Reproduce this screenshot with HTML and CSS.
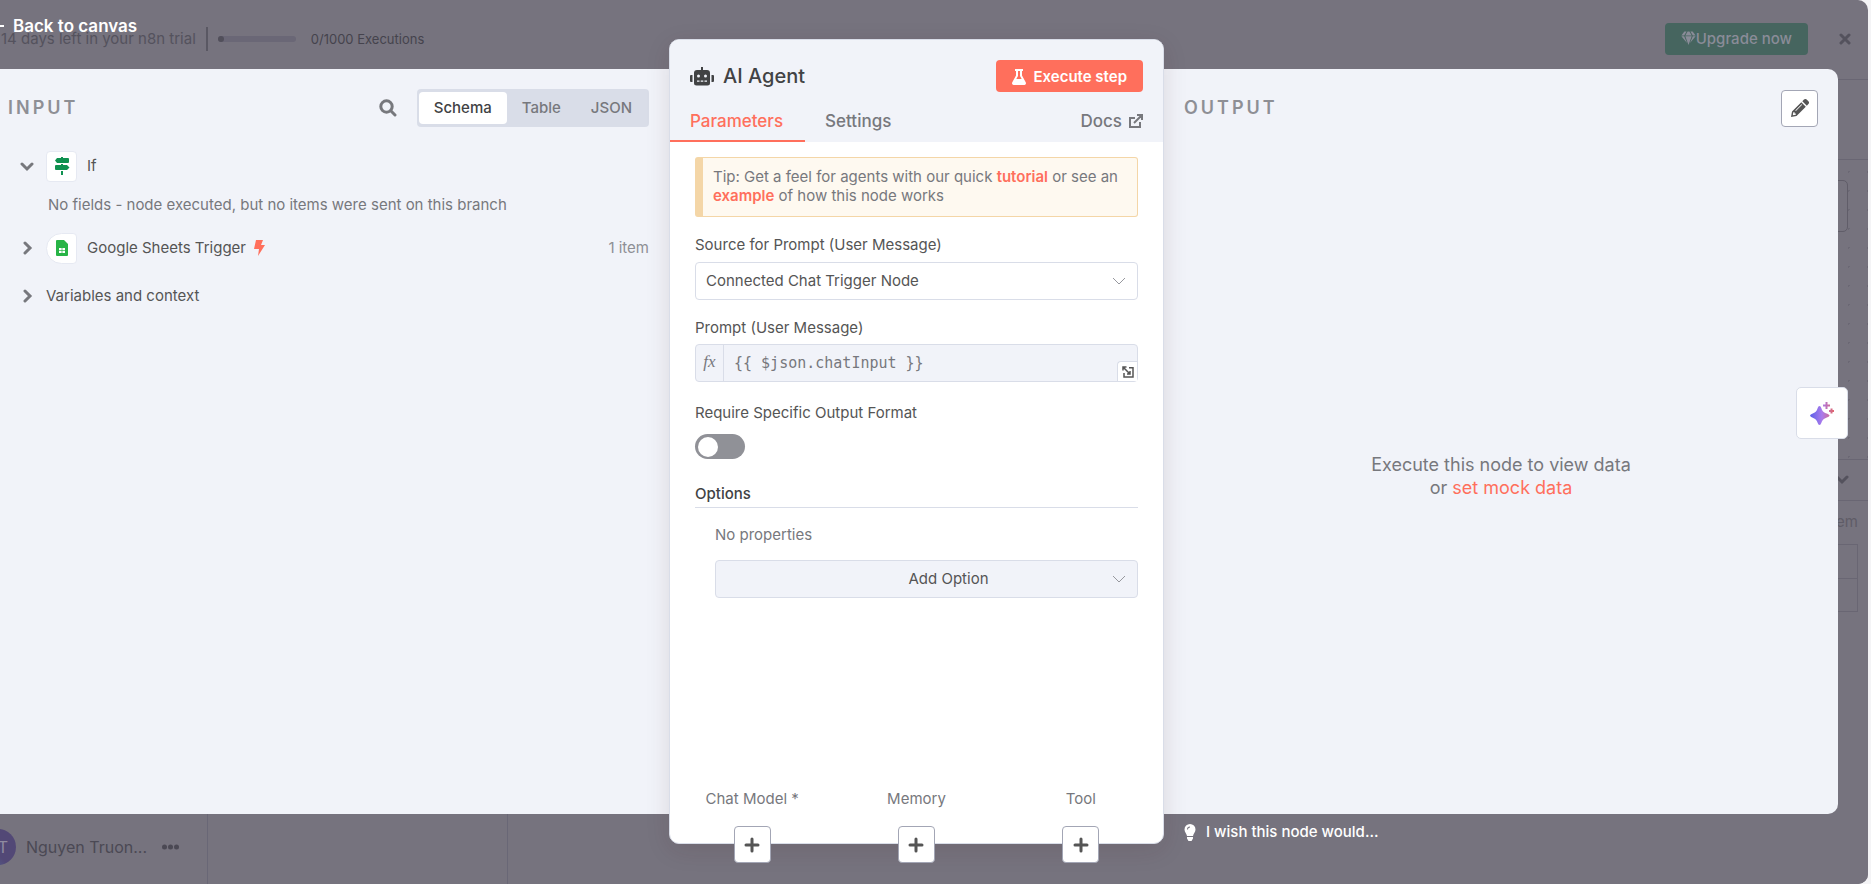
FILE: index.html
```html
<!DOCTYPE html>
<html lang="en">
<head>
    <meta charset="UTF-8">
    <meta name="viewport" content="width=device-width, initial-scale=1.0">
    <title>AI Agent</title>
    <link rel="stylesheet" href="styles.css">
</head>
<body>

<div class="app">
    <!-- workflow editor, dimmed behind the node view -->
    <header class="trial-bar">
        <span class="trial-text">14 days left in your n8n trial</span>
        <span class="trial-divider"></span>
        <span class="trial-progress"><span class="trial-progress-fill"></span></span>
        <span class="trial-count">0/1000 Executions</span>
        <button class="upgrade-btn" type="button">
            <svg width="15" height="15" viewBox="0 0 16 15" fill="currentColor"><path d="M3.6 0h2.3L3.4 4.2H.4zM7 0h2l2.4 4.2H4.600zM10.100 0h2.300l3.200 4.200h-3zM.4 5.200h3l3 7.200zM4.600 5.200h6.800L8 14.500zM12.600 5.200h3L9.600 12.400z"/></svg>Upgrade now
        </button>
        <button class="dismiss-btn" type="button" aria-label="Dismiss">
            <svg width="12" height="12" viewBox="0 0 12 12" fill="none" stroke="currentColor" stroke-width="3" stroke-linecap="round"><path d="M2 2l8 8M10 2l-8 8"/></svg>
        </button>
    </header>

    <div class="editor">
        <aside class="sidebar">
            <div class="user">
                <span class="avatar">T</span>
                <span class="user-name">Nguyen Truon...</span>
                <svg width="17" height="6" viewBox="0 0 17 6" fill="currentColor"><circle cx="2.500" cy="3" r="2.500"/><circle cx="8.500" cy="3" r="2.500"/><circle cx="14.500" cy="3" r="2.500"/></svg>
            </div>
        </aside>
        <div class="workflow">
            <div class="workflow-head"></div>
            <div class="canvas"><span class="canvas-tool"></span></div>
            <div class="logs">
                <div class="logs-head">
                    <svg width="14" height="10" viewBox="0 0 14 10" fill="none" stroke="currentColor" stroke-width="3" stroke-linecap="round"><path d="M2 2l5 5 5-5"/></svg>
                </div>
                <div class="logs-body">
                    <div class="logs-list"></div>
                    <div class="logs-data">
                        <span class="logs-count">1 item</span>
                        <div class="logs-table"><div></div><div></div></div>
                    </div>
                </div>
            </div>
        </div>
    </div>

    <!-- node detail view -->
    <div class="node-view">
        <a class="back-link" href="#"><svg width="16" height="12" viewBox="0 0 16 12" fill="none" stroke="currentColor" stroke-width="2"><path d="M16 6H2M7 1L2 6l5 5"/></svg>Back to canvas</a>

        <main class="panels">
            <section class="panel input-panel">
                <div class="panel-head">
                    <h2>INPUT</h2>
                    <button class="search-btn" type="button" aria-label="Search">
                        <svg width="18" height="18" viewBox="0 0 18 18" fill="none" stroke="currentColor" stroke-width="3"><circle cx="7.500" cy="7.500" r="5.700"/><path d="M11.800 11.800L16 16" stroke-linecap="round"/></svg>
                    </button>
                    <div class="view-switch">
                        <button class="active" type="button">Schema</button>
                        <button type="button">Table</button>
                        <button type="button">JSON</button>
                    </div>
                </div>

                <div class="schema">
                    <div class="schema-row">
                        <svg class="chevron" width="14" height="14" viewBox="0 0 14 14"><path d="M2 5l5 5 5-5"/></svg>
                        <span class="node-icon">
                            <svg width="16" height="18" viewBox="0 0 16 18" fill="#0f9150"><path d="M7 0h2v1h5a1 1 0 0 1 1 1v3a1 1 0 0 1-1 1H3L1 3.500 3 1h4zM7 7h2v1h4l2.500 2.500L13 13H2a1 1 0 0 1-1-1V9a1 1 0 0 1 1-1h5zM7 14h2v4H7z"/></svg>
                        </span>
                        <span>If</span>
                    </div>
                    <p class="schema-note">No fields - node executed, but no items were sent on this branch</p>
                    <div class="schema-row">
                        <svg class="chevron" width="14" height="14" viewBox="0 0 14 14"><path d="M5 2l5 5-5 5"/></svg>
                        <span class="node-icon trigger">
                            <svg width="12" height="16" viewBox="0 0 12 16"><path fill="#28b446" d="M1 0h7l4 4v11a1 1 0 0 1-1 1H1a1 1 0 0 1-1-1V1a1 1 0 0 1 1-1z"/><path fill="#fff" d="M3 8h6v5H3z"/><path stroke="#28b446" stroke-width=".7" d="M3 10.500h6M6 8v5"/></svg>
                        </span>
                        <span>Google Sheets Trigger</span>
                        <svg class="bolt" width="11" height="16" viewBox="0 0 11 16"><path d="M2 0h7L7 5h4L4 16l1-7H0z"/></svg>
                        <span class="item-count">1 item</span>
                    </div>
                    <div class="schema-row variables">
                        <svg class="chevron" width="14" height="14" viewBox="0 0 14 14"><path d="M5 2l5 5-5 5"/></svg>
                        <span>Variables and context</span>
                    </div>
                </div>
            </section>

            <section class="node-card">
                <div class="card-head">
                    <div class="title-row">
                        <svg width="24" height="19" viewBox="0 0 24 19" fill="#414244"><path d="M11 0h2v3h4a3 3 0 0 1 3 3v10a2.500 2.500 0 0 1-2.500 2.500h-11A2.500 2.500 0 0 1 4 16V6a3 3 0 0 1 3-3h4zM0 9a1 1 0 0 1 1-1h1.500v7H1a1 1 0 0 1-1-1zM21.500 8H23a1 1 0 0 1 1 1v5a1 1 0 0 1-1 1h-1.500z"/><g fill="#f1f3f9"><circle cx="8.500" cy="9" r="1.500"/><circle cx="15.500" cy="9" r="1.500"/><path d="M7 13.500h2.500v1.200H7zM10.700 13.500h2.600v1.200h-2.600zM14.500 13.500H17v1.200h-2.500z"/></g></svg>
                        <h1>AI Agent</h1>
                        <button class="execute-btn" type="button">
                            <svg width="14" height="16" viewBox="0 0 14 16" fill="currentColor"><path fill-rule="evenodd" d="M3 0h8v2h-1v4.500l3.700 6.800A1.800 1.800 0 0 1 12 16H2A1.800 1.800 0 0 1 .3 13.300L4 6.500V2H3zM6 2v5L4.300 10h5.400L8 7V2z"/></svg>
                            Execute step
                        </button>
                    </div>
                    <nav class="tabs">
                        <a class="active" href="#">Parameters</a>
                        <a href="#">Settings</a>
                        <a class="docs" href="#">Docs
                            <svg width="14" height="14" viewBox="0 0 14 14" fill="none" stroke="currentColor" stroke-width="2"><path d="M6 4H1v9h10V8M8 1h5v5M13 1L5 9"/></svg>
                        </a>
                    </nav>
                </div>

                <form class="params">
                    <p class="tip">Tip: Get a feel for agents with our quick <a href="#">tutorial</a> or see an <a href="#">example</a> of how this node works</p>

                    <div class="field">
                        <label for="source">Source for Prompt (User Message)</label>
                        <div class="select">
                            <select id="source"><option>Connected Chat Trigger Node</option></select>
                            <svg width="14" height="8" viewBox="0 0 14 8"><path d="M1 1l6 6 6-6"/></svg>
                        </div>
                    </div>

                    <div class="field prompt">
                        <label for="prompt">Prompt (User Message)</label>
                        <div class="expression">
                            <span class="fx">fx</span>
                            <input id="prompt" type="text" value="{{ $json.chatInput }}" readonly>
                            <button class="expand-btn" type="button" aria-label="Open editor">
                                <svg width="12" height="12" viewBox="0 0 12 12" fill="none" stroke="currentColor" stroke-width="1.500"><path d="M7 1.700h4V11H2V7M1 4.500V1h3.500M1 1l7 7M8 5v3H5"/></svg>
                            </button>
                        </div>
                    </div>

                    <div class="field format">
                        <label for="format">Require Specific Output Format</label>
                        <input class="toggle" id="format" type="checkbox">
                    </div>

                    <h3>Options</h3>
                    <div class="options">
                        <p>No properties</p>
                        <div class="select add-option">
                            <select aria-label="Add Option"><option>Add Option</option></select>
                            <svg width="14" height="8" viewBox="0 0 14 8"><path d="M1 1l6 6 6-6"/></svg>
                        </div>
                    </div>
                </form>

                <div class="connections">
                    <div class="connection">
                        <span>Chat Model *</span>
                        <button type="button" aria-label="Add chat model"><svg width="16" height="16" viewBox="0 0 16 16"><path d="M8 2v12M2 8h12"/></svg></button>
                    </div>
                    <div class="connection">
                        <span>Memory</span>
                        <button type="button" aria-label="Add memory"><svg width="16" height="16" viewBox="0 0 16 16"><path d="M8 2v12M2 8h12"/></svg></button>
                    </div>
                    <div class="connection">
                        <span>Tool</span>
                        <button type="button" aria-label="Add tool"><svg width="16" height="16" viewBox="0 0 16 16"><path d="M8 2v12M2 8h12"/></svg></button>
                    </div>
                </div>
            </section>

            <section class="panel output-panel">
                <div class="panel-head">
                    <h2>OUTPUT</h2>
                    <button class="edit-btn" type="button" aria-label="Edit output">
                        <svg width="18" height="18" viewBox="0 0 18 18" fill="currentColor"><path fill-rule="evenodd" d="M10.300 3.200l4.500 4.500L5.500 17 0 18l1-5.500zM2.300 13.200l-.5 3 3-.5v-1.300H3.600v-1.200zM10.500 5.200L4.300 11.400l.6.600 6.200-6.200z"/><path d="M11.300 2.200L13 .6a2 2 0 0 1 2.700 0l1.700 1.700a2 2 0 0 1 0 2.700l-1.600 1.700z"/></svg>
                    </button>
                </div>
                <p class="empty">Execute this node to view data<br>or <a href="#">set mock data</a></p>
            </section>
        </main>

        <a class="wish-link" href="#">
            <svg width="12" height="17" viewBox="0 0 12 17" fill="currentColor"><path fill-rule="evenodd" d="M6 0a5.500 5.500 0 0 1 5.500 5.500c0 2.700-2 3.800-2.500 6.500H3C2.500 9.300.5 8.200.5 5.500A5.500 5.500 0 0 1 6 0zM3 5.500h1A2 2 0 0 1 6 3.500v-1a3 3 0 0 0-3 3zM3 13h6v1.500L7.500 17h-3L3 14.500z"/></svg>
            I wish this node would...
        </a>
    </div>

    <button class="assistant-btn" type="button" aria-label="Assistant">
        <svg width="24" height="24" viewBox="0 0 24 24">
            <defs>
                <linearGradient id="spark" gradientUnits="userSpaceOnUse" x1="0" y1="12" x2="24" y2="12">
                    <stop offset="0" stop-color="#5b60e8"/>
                    <stop offset=".5" stop-color="#aa7bec"/>
                    <stop offset="1" stop-color="#e0656a"/>
                </linearGradient>
            </defs>
            <path fill="url(#spark)" d="M9.500 5q1.200 0 1.800 2 1.200 4.200 4.500 5.300 3.700 1.100 3.700 2.300t-3.700 2.300q-3.300 1.100-4.500 5.100-.6 2-1.800 2t-1.800-2q-1.200-4-4.500-5.100Q0 15.800 0 14.600t3.200-2.300q3.300-1.100 4.500-5.300.6-2 1.800-2z"/>
            <path fill="none" stroke="url(#spark)" stroke-width="2" d="M16.500 1v7M13 4.500h7M21.500 7.500v5M19 10h5"/>
        </svg>
    </button>
</div>

</body>
</html>
```
FILE: styles.css
```css
* {
    margin: 0;
    padding: 0;
    box-sizing: border-box;
}

body {
    font-family: Inter, "Liberation Sans", sans-serif;
    font-size: 15px;
    line-height: 20px;
    color: #555;
    background-color: #f4f4f6;
}

button, input, select {
    font: inherit;
    color: inherit;
    border: none;
    background: none;
}

button {
    cursor: pointer;
}

a {
    color: #ff6f5c;
    text-decoration: none;
}

svg {
    display: block;
    flex: none;
}

.app {
    position: relative;
    display: flex;
    flex-direction: column;
    min-height: 100vh;
    margin-right: 3px;
    background-color: #76737e;
    border-radius: 0 10px 10px 0;
    overflow: hidden;
    color: #54525d;
}

/* dimmed editor */
.trial-bar {
    display: flex;
    align-items: center;
    height: 80px;
    padding: 0 17px 2px 1px;
    border-bottom: 1px solid #696673;
}

.trial-text {
    margin-right: 10px;
}

.trial-divider {
    width: 2px;
    height: 24px;
    background-color: #5a5863;
    margin-right: 10px;
}

.trial-progress {
    width: 78px;
    height: 6px;
    border-radius: 3px;
    background-color: #6a6776;
    margin-right: 15px;
}

.trial-progress-fill {
    display: block;
    width: 6px;
    height: 6px;
    border-radius: 3px;
    background-color: #514f5a;
}

.trial-count {
    font-size: 13px;
    color: #45434d;
}

.upgrade-btn {
    display: flex;
    align-items: center;
    height: 32px;
    padding: 0 16px;
    margin-left: auto;
    border-radius: 4px;
    background-color: #46655f;
    color: #8a8c98;
    font-weight: 500;
}

.dismiss-btn {
    margin-left: 31px;
}

.editor {
    flex: 1;
    display: flex;
}

.sidebar {
    width: 208px;
    display: flex;
    align-items: flex-end;
    border-right: 1px solid #696776;
}

.user {
    display: flex;
    align-items: center;
    padding-bottom: 19px;
    font-size: 16px;
    color: #4b4954;
}

.avatar {
    width: 36px;
    height: 36px;
    margin-left: -20px;
    margin-right: 10px;
    padding-right: 8px;
    border-radius: 50%;
    background: linear-gradient(to top right, #546b96, #524876 40%);
    color: #8f8ba0;
    line-height: 36px;
    text-align: right;
}

.user-name {
    margin-right: 15px;
}

.workflow {
    flex: 1;
    display: flex;
    flex-direction: column;
}

.workflow-head {
    height: 80px;
    border-bottom: 1px solid #696673;
}

.canvas {
    flex: 1;
    display: flex;
    justify-content: flex-end;
    padding: 20px;
    background: radial-gradient(circle, #6b6874 1px, transparent 1px) right -9px top 2px / 19px 19px;
}

.canvas-tool {
    width: 52px;
    height: 52px;
    border: 1px solid #605d69;
    border-radius: 5px;
    background-color: #76737e;
}

.logs {
    height: 425px;
    display: flex;
    flex-direction: column;
    background-color: #76737e;
    border-top: 1px solid #696673;
}

.logs-head {
    display: flex;
    justify-content: flex-end;
    align-items: center;
    height: 41px;
    padding-right: 19px;
    border-bottom: 1px solid #696673;
}

.logs-body {
    flex: 1;
    display: grid;
    grid-template-columns: 300px 1fr;
}

.logs-list {
    border-right: 1px solid #696776;
}

.logs-data {
    padding: 11px 10px;
    text-align: right;
    color: #5f5c67;
}

.logs-table {
    margin-top: 12px;
    border: 1px solid #696673;
}

.logs-table div {
    height: 33px;
}

.logs-table div + div {
    border-top: 1px solid #696673;
}

/* node detail view over the editor */
.node-view {
    position: absolute;
    inset: 0;
    display: flex;
    flex-direction: column;
}

.back-link {
    display: flex;
    align-items: center;
    gap: 9px;
    height: 69px;
    padding-bottom: 18px;
    margin-left: -12px;
    color: #fff;
    font-size: 17px;
    font-weight: 600;
}

.panels {
    flex: 1;
    display: grid;
    grid-template-columns: 669fr 495px 674fr;
    margin-right: 30px;
    background-color: #f1f3f9;
    border-radius: 0 10px 10px 0;
    color: #555;
}

.panel {
    display: flex;
    flex-direction: column;
    padding: 20px;
}

.input-panel {
    padding-left: 8px;
}

.panel-head {
    display: flex;
    align-items: center;
    height: 38px;
}

.panel-head h2 {
    flex: 1;
    color: #8e8f95;
    font-size: 18px;
    font-weight: 600;
    letter-spacing: 3px;
}

.search-btn {
    margin-right: 20px;
    color: #77787d;
}

.view-switch {
    display: flex;
    padding: 3px 2px;
    border-radius: 4px;
    background-color: #d9dde8;
}

.view-switch button {
    height: 32px;
    padding: 0 15px;
    border-radius: 4px;
    color: #77787d;
    font-weight: 500;
}

.view-switch .active {
    background-color: #fff;
    color: #414244;
}

.schema {
    padding: 23px 0 0 12px;
}

.schema-row {
    display: flex;
    align-items: center;
    gap: 10px;
    height: 32px;
}

.chevron {
    margin-right: 2px;
    fill: none;
    stroke: #77787d;
    stroke-width: 3;
    stroke-linecap: round;
}

.bolt {
    margin-left: -2px;
    fill: #ff6f5c;
}

.node-icon {
    display: flex;
    align-items: center;
    justify-content: center;
    width: 31px;
    height: 31px;
    border: 1px solid #e6e9f2;
    border-radius: 4px;
    background-color: #fff;
}

.node-icon.trigger {
    border-radius: 16px 4px 4px 16px;
}

.schema-note {
    margin: 13px 0 17px 28px;
    color: #77787d;
}

.item-count {
    margin-left: auto;
    color: #8e8f95;
}

.variables {
    margin-top: 16px;
}

/* middle card, taller than the side panels */
.node-card {
    display: flex;
    flex-direction: column;
    margin: -30px 0;
    border: 1px solid #d9dde8;
    border-radius: 10px;
    background-color: #fff;
    box-shadow: 0 6px 24px rgba(68, 28, 23, .12);
}

.card-head {
    padding: 20px 20px 0;
    border-radius: 9px 9px 0 0;
    background-color: #f1f3f9;
}

.title-row {
    display: flex;
    align-items: center;
    height: 32px;
}

.title-row h1 {
    flex: 1;
    margin-left: 9px;
    color: #414244;
    font-size: 20px;
    font-weight: 500;
}

.execute-btn {
    display: flex;
    align-items: center;
    gap: 7px;
    height: 32px;
    padding: 1px 16px 0;
    border-radius: 4px;
    background-color: #ff6f5c;
    color: #fff;
    font-weight: 600;
}

.tabs {
    display: flex;
    margin: 8px 0 0 -20px;
    font-size: 17px;
    font-weight: 500;
}

.tabs a {
    height: 42px;
    padding: 0 22px 0 20px;
    color: #77787d;
    line-height: 42px;
}

.tabs .active {
    border-bottom: 2px solid #ff6f5c;
    color: #ff6f5c;
}

.tabs .docs {
    display: flex;
    align-items: center;
    gap: 7px;
    margin-left: auto;
    padding-right: 0;
}

.params {
    flex: 1;
    padding: 15px 25px 0;
}

.tip {
    padding: 9px 16px 11px 10px;
    border: 1px solid #f4d6a7;
    border-left-width: 8px;
    border-radius: 3px;
    background-color: #fef9f0;
    color: #77787d;
    line-height: 19px;
}

.tip a {
    font-weight: 600;
}

.field {
    margin-top: 18px;
}

.field label {
    display: block;
    margin-bottom: 7px;
}

.prompt label {
    margin-bottom: 6px;
}

.select {
    position: relative;
}

.select select {
    display: block;
    width: 100%;
    height: 38px;
    padding: 0 10px;
    border: 1px solid #d9dde8;
    border-radius: 4px;
    appearance: none;
}

.select svg {
    position: absolute;
    top: 15px;
    right: 12px;
    fill: none;
    stroke: #97989e;
    stroke-width: 1;
    pointer-events: none;
}

.expression {
    position: relative;
    display: flex;
    height: 38px;
    border: 1px solid #d9dde8;
    border-radius: 4px;
    background-color: #f1f3f9;
    color: #77787d;
}

.fx {
    width: 28px;
    border-right: 1px solid #d9dde8;
    font-family: "Liberation Serif", serif;
    font-size: 17px;
    font-style: italic;
    line-height: 34px;
    text-align: center;
}

.expression input {
    flex: 1;
    min-width: 0;
    padding: 0 10px;
    font-family: "DejaVu Sans Mono", monospace;
}

.expand-btn {
    position: absolute;
    right: 0;
    bottom: 0;
    display: flex;
    align-items: center;
    justify-content: center;
    width: 20px;
    height: 20px;
    border: 1px solid #d9dde8;
    border-width: 1px 0 0 1px;
    border-radius: 4px 0 0 0;
    background-color: #fff;
    color: #555;
}

.format {
    margin-top: 21px;
}

.format label {
    margin-bottom: 11px;
}

.toggle {
    display: flex;
    align-items: center;
    width: 50px;
    height: 25px;
    padding: 0 3px;
    border-radius: 13px;
    background-color: #909197;
    appearance: none;
}

.toggle::before {
    content: "";
    width: 20px;
    height: 20px;
    border-radius: 50%;
    background-color: #fff;
}

.toggle:checked {
    justify-content: flex-end;
    background-color: #ff6f5c;
}

.params h3 {
    margin-top: 25px;
    padding-bottom: 3px;
    border-bottom: 1px solid #d9dde8;
    color: #414244;
    font-size: 15px;
    font-weight: 500;
}

.options {
    padding: 17px 0 0 20px;
}

.options p {
    margin-bottom: 15px;
    color: #77787d;
}

.add-option select {
    padding-left: 54px;
    background-color: #f1f3f9;
    text-align: center;
}

.connections {
    display: grid;
    grid-template-columns: repeat(3, 1fr);
    margin-bottom: -20px;
}

.connection {
    display: flex;
    flex-direction: column;
    align-items: center;
    gap: 17px;
    color: #77787d;
}

.connection button,
.edit-btn {
    display: flex;
    align-items: center;
    justify-content: center;
    width: 37px;
    height: 37px;
    border: 1px solid #a3a6b5;
    border-radius: 4px;
    background-color: #fff;
    color: #555;
}

.connection path {
    stroke: #555;
    stroke-width: 3;
    stroke-linecap: round;
}

.empty {
    margin: auto 0;
    padding-top: 30px;
    color: #77787d;
    font-size: 18px;
    line-height: 23px;
    text-align: center;
}

.wish-link {
    display: flex;
    align-items: center;
    gap: 10px;
    height: 70px;
    padding-bottom: 34px;
    margin-right: 30px;
    padding-left: calc((100% - 525px) * 669 / 1343 + 515px);
    color: #fff;
    font-weight: 500;
}

.assistant-btn {
    position: absolute;
    right: 20px;
    bottom: 445px;
    display: flex;
    align-items: center;
    justify-content: center;
    width: 52px;
    height: 52px;
    border: 1px solid #d9dde8;
    border-radius: 5px;
    background-color: #fff;
}
```
